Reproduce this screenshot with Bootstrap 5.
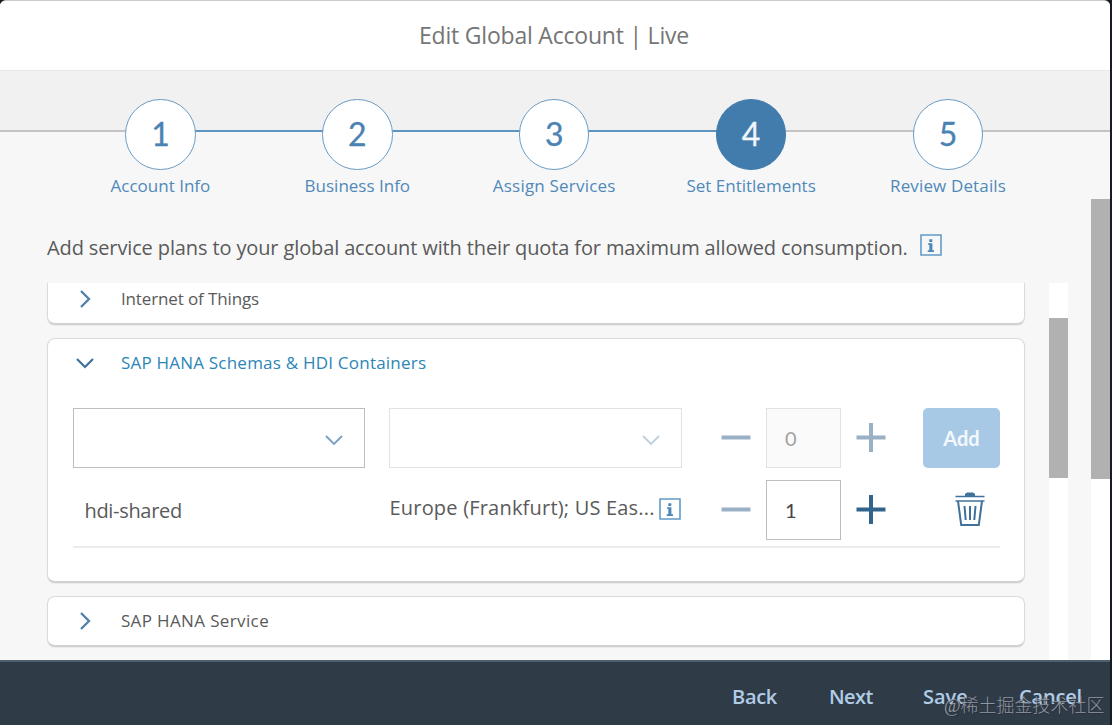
<!DOCTYPE html>
<html lang="en">
<head>
<meta charset="utf-8">
<title>Edit Global Account</title>
<link href="https://cdn.jsdelivr.net/npm/bootstrap@5.3.0/dist/css/bootstrap.min.css" rel="stylesheet">
<style>
body{background:#151c24;font-family:"Open Sans","Noto Sans",sans-serif;color:#5a5a5a;height:725px;overflow:hidden}
.dialog{width:1109.5px;height:725px;background:#f7f7f7;border-radius:6px 6px 0 0;overflow:hidden;border-top:1px solid #cbcbcb}
.dlg-title{height:70px;background:#fff;border-bottom:1px solid #e8e8e8;font-size:23px;letter-spacing:-.21px;color:#757575;line-height:69px;padding-right:1.5px}
.steps{height:128px;padding:28px 62px 0;background:linear-gradient(#f1f1f1 59.5px,#c3c3c3 59.5px,#c3c3c3 61px,#f7f7f7 61px)}
.step{width:196.9px;color:#5089ba;font-size:17px;line-height:20px;position:relative}
.step.linked::before{content:"";position:absolute;left:98px;width:197px;top:31px;height:2px;background:#5f94c0}
.step-num{width:70.5px;height:70.5px;border:1.4px solid #6a9cc5;background:#fff;color:#4a83b3;font:400 32px/67px Lato,sans-serif;position:relative;z-index:1;margin-bottom:6.5px;-webkit-text-stroke:.3px currentColor}
.step.now .step-num{background:#427cac;border-color:#427cac;color:#f2f7fb}
.main-area{height:461px}
.intro{height:84px;padding:35px 0 0 47px;font-size:20px;line-height:28px;letter-spacing:-.125px}
.intro .info{margin:0 0 0 12px}
.plans{height:377px;padding-left:47.4px;overflow:hidden}
.plan-list{width:977.5px}
.panel{background:#fff;border:1.2px solid #d9dbdb;border-bottom:2px solid #cfd1d1;border-radius:8px;box-shadow:0 1px 1px #e9e9e9;margin-bottom:14px}
.panel-top{font-size:17px;letter-spacing:-.12px;padding-left:24.6px;height:50px}
.panel-top svg{width:24px;height:24px;margin-right:23.9px}
.first{height:42px;border-top:0;border-radius:0 0 8px 8px;margin-bottom:13px}
.first .panel-top{height:31px}
.open{height:245px;margin-bottom:13px}
.open .panel-top{color:#2b86b6;letter-spacing:.22px;height:48px}
.last{height:51px}
.last .panel-top{letter-spacing:.37px;height:48px}
.entry{padding-left:24.6px}
.entry-first{margin-top:21px}
.combo{width:292.5px;height:60px;border:1.5px solid #bdbdbd;margin-right:24px;padding-right:18px}
.combo svg{margin-top:4px}
.combo.off{border-color:#e2e2e2}
.sub{margin:0 15px}
.qty{width:75px;height:60px;border:1.4px solid #bdbdbd;font:20px/58px Lato,sans-serif;padding-left:18px;color:#444}
.qty.off{border-color:#e2e2e2;background:#fafafa;color:#a2a2a2}
.plus{margin-left:15px}
.add{width:77px;height:60px;border:0;border-radius:5px;background:#a8c9e6!important;color:#f3f8fc!important;font:700 20px Lato,sans-serif;margin-left:37px;opacity:1!important}
.entry-row{margin-top:12px;font-size:20px;height:60px}
.cell-a{width:292.5px;margin-right:24px;padding:2px 0 0 11.5px;letter-spacing:-.32px}
.cell-b{width:292.5px;letter-spacing:.2px;margin:-5px 24px 0 0}
.cell-b svg{margin:3px 1px 0 0}
.trash{margin:-2px 0 0 68px}
.rule{width:927px;height:2px;background:#ebebeb;margin:6px 0 0 24.6px}
.track{width:19px;background:#fff}
.thumb{background:#b1b1b1}
.track-in{margin-left:24px;height:377px;padding-top:35px}
.track-in .thumb{height:159.5px}
.track-out{width:18.5px;height:461px}
.track-out .thumb{height:279.5px}
.foot{height:66px;background:#303b48;border-top:2px solid #4d5e6e;color:#b1cce5;font-size:20px;font-weight:600;line-height:26px;padding-top:22px;padding-left:732px}
.foot a{color:inherit;text-decoration:none}
.stamp{position:absolute;left:944px;top:692px;font:300 18px/28px "Liberation Serif","Noto Sans CJK SC",sans-serif;color:#9096a0;text-shadow:1px 1px 1px #26303a;white-space:nowrap}
</style>
</head>
<body>
<svg class="d-none">
  <symbol id="chev" viewBox="0 0 24 24"><path d="M4 8l8 8 8-8" fill="none" stroke="currentColor"/></symbol>
  <symbol id="info" viewBox="0 0 22 22"><path d="M1 1h20v20H1z" fill="none" stroke="#629bc8" stroke-width="1.6"/><path d="M9.3 5.2h3v2.7h-3zM8 9.2h4.4v7h1.6v1.7H7.7v-1.7h1.6v-5.5H8z" fill="#4f88b7"/></symbol>
  <symbol id="minus" viewBox="0 0 30 30"><path d="M.5 14.5h29" stroke="currentColor" stroke-width="4"/></symbol>
  <symbol id="plus" viewBox="0 0 30 30"><path d="M.5 14.5h29M15 0v29" stroke="currentColor" stroke-width="4"/></symbol>
</svg>
<div class="dialog d-flex flex-column">
  <header class="dlg-title text-center flex-shrink-0">Edit Global Account | Live</header>
  <nav class="steps d-flex flex-shrink-0">
    <div class="step linked d-flex flex-column align-items-center"><div class="step-num rounded-circle text-center">1</div><span>Account Info</span></div>
    <div class="step linked d-flex flex-column align-items-center"><div class="step-num rounded-circle text-center">2</div><span>Business Info</span></div>
    <div class="step linked d-flex flex-column align-items-center"><div class="step-num rounded-circle text-center">3</div><span style="letter-spacing:.2px">Assign Services</span></div>
    <div class="step now d-flex flex-column align-items-center"><div class="step-num rounded-circle text-center">4</div><span>Set Entitlements</span></div>
    <div class="step d-flex flex-column align-items-center"><div class="step-num rounded-circle text-center">5</div><span style="letter-spacing:.14px">Review Details</span></div>
  </nav>
  <main class="main-area d-flex flex-shrink-0">
    <div class="flex-grow-1">
      <div class="intro d-flex align-items-start text-nowrap">Add service plans to your global account with their quota for maximum allowed consumption.<svg class="info" width="22" height="22"><use href="#info"/></svg></div>
      <div class="plans d-flex">
        <div class="plan-list flex-shrink-0">
          <section class="panel first"><div class="panel-top d-flex align-items-center"><svg style="transform:rotate(-90deg)" color="#4f80ab" stroke-width="2.3"><use href="#chev"/></svg>Internet of Things</div></section>
          <section class="panel open">
            <div class="panel-top d-flex align-items-center"><svg color="#40719c" stroke-width="2.2"><use href="#chev"/></svg>SAP HANA Schemas &amp; HDI Containers</div>
            <div class="entry entry-first d-flex align-items-center">
              <div class="combo d-flex align-items-center justify-content-end"><svg width="24" height="24" color="#7ba0c0" stroke-width="1.9"><use href="#chev"/></svg></div>
              <div class="combo off d-flex align-items-center justify-content-end"><svg width="24" height="24" color="#bfd0df" stroke-width="1.9"><use href="#chev"/></svg></div>
              <svg class="sub" width="30" height="30" color="#9ab0c4"><use href="#minus"/></svg>
              <div class="qty off">0</div>
              <svg class="plus" width="30" height="30" color="#9ab0c4"><use href="#plus"/></svg>
              <button class="btn add p-0" disabled>Add</button>
            </div>
            <div class="entry entry-row d-flex align-items-center">
              <div class="cell-a">hdi-shared</div>
              <div class="cell-b d-flex align-items-center text-nowrap">Europe (Frankfurt); US Eas...<svg class="ms-auto" width="22" height="22"><use href="#info"/></svg></div>
              <svg class="sub" width="30" height="30" color="#9ab0c4"><use href="#minus"/></svg>
              <div class="qty">1</div>
              <svg class="plus" width="30" height="30" color="#32638b"><use href="#plus"/></svg>
              <svg class="trash" width="32" height="36" viewBox="0 0 32 36" fill="none" stroke="#40719c"><path d="M1.5 5.5h29M1.5 10h29" stroke-width="1.6"/><path d="M11 5V3l2-1.5h6L21 3v2z" fill="#40719c" stroke="none"/><path d="M4 10l3.2 24h17.6L28 10" stroke-width="2"/><path d="M10.5 15l1.2 14M16 15v14M21.5 15l-1.2 14" stroke-width="2"/></svg>
            </div>
            <div class="rule"></div>
          </section>
          <section class="panel last"><div class="panel-top d-flex align-items-center"><svg style="transform:rotate(-90deg)" color="#4f80ab" stroke-width="2.3"><use href="#chev"/></svg>SAP HANA Service</div></section>
        </div>
        <div class="track track-in"><div class="thumb"></div></div>
      </div>
    </div>
    <div class="track track-out"><div class="thumb"></div></div>
  </main>
  <footer class="foot d-flex flex-shrink-0 text-nowrap">
    <a href="#" style="width:97px;letter-spacing:-.29px">Back</a><a href="#" style="width:94px;letter-spacing:-.6px">Next</a><a href="#" style="width:96px">Save</a><a href="#" style="letter-spacing:-.17px">Cancel</a>
  </footer>
</div>
<div class="stamp">@稀土掘金技术社区</div>
<script src="https://cdn.jsdelivr.net/npm/bootstrap@5.3.0/dist/js/bootstrap.bundle.min.js"></script>
</body>
</html>
